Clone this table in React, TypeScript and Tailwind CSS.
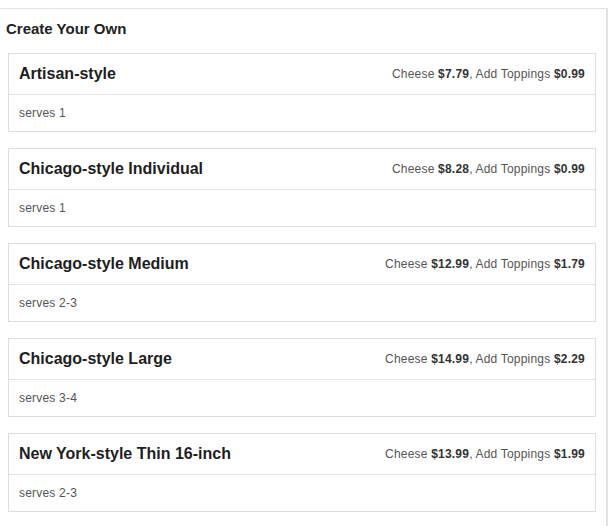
import React from "react";

const items = [
  { name: "Artisan-style", cheese: "$7.79", top: "$0.99", serves: "serves 1" },
  { name: "Chicago-style Individual", cheese: "$8.28", top: "$0.99", serves: "serves 1" },
  { name: "Chicago-style Medium", cheese: "$12.99", top: "$1.79", serves: "serves 2-3" },
  { name: "Chicago-style Large", cheese: "$14.99", top: "$2.29", serves: "serves 3-4" },
  { name: "New York-style Thin 16-inch", cheese: "$13.99", top: "$1.99", serves: "serves 2-3" },
];

export default function App() {
  return (
    <div className="w-[610px] h-[526px] bg-white overflow-hidden" style={{ fontFamily: '"Liberation Sans", Arial, sans-serif' }}>
      <div className="mt-[8px] w-[608px] h-[518px] border-t border-r-2 border-[#e2e2e2]">
        <div className="pl-[6px] pt-[10px] h-[30px] leading-[20px] text-[15px] font-bold text-[#222]">Create Your Own</div>
        <div className="flex flex-col gap-[16px] pl-[8px] pr-[10px] pt-[14px]">
          {items.map((it) => (
            <div key={it.name} className="border border-[#dedede]">
              <div className="h-[41px] flex items-center justify-between px-[10px] border-b border-[#e3e3e3]">
                <span className="text-[16px] font-bold text-[#1e1e1e]">{it.name}</span>
                <span className="text-[12px] tracking-[0.2px] text-[#555]">
                  Cheese <b className="text-[#333]">{it.cheese}</b>, Add Toppings <b className="text-[#333]">{it.top}</b>
                </span>
              </div>
              <div className="h-[36px] flex items-center px-[10px] text-[12px] tracking-[0.2px] text-[#555]">{it.serves}</div>
            </div>
          ))}
        </div>
      </div>
    </div>
  );
}
